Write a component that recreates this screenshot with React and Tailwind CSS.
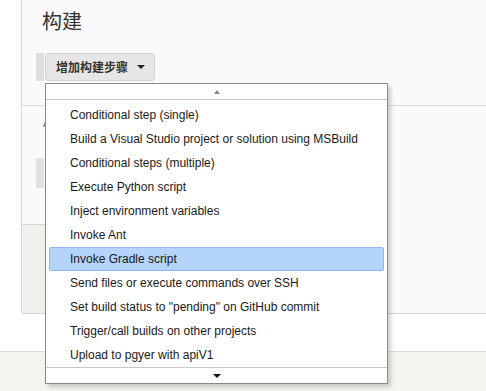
const items = [
  "Conditional step (single)",
  "Build a Visual Studio project or solution using MSBuild",
  "Conditional steps (multiple)",
  "Execute Python script",
  "Inject environment variables",
  "Invoke Ant",
  "Invoke Gradle script",
  "Send files or execute commands over SSH",
  'Set build status to "pending" on GitHub commit',
  "Trigger/call builds on other projects",
  "Upload to pgyer with apiV1",
];

const StepMenu = () => (
  <div className="absolute left-[45px] top-[83px] w-[343px] h-[301px] bg-white border border-[#8a8a8a] shadow-[3px_3px_4px_rgba(0,0,0,0.18)] flex flex-col">
    <div className="h-[16px] border-b border-[#c8c8c8] flex items-center justify-center">
      <span className="w-0 h-0 border-l-[3px] border-r-[3px] border-b-[4px] border-l-transparent border-r-transparent border-b-[#888]" />
    </div>
    <ul className="flex flex-col pt-[3px] px-[3px]">
      {items.map((label) => (
        <li
          key={label}
          className={
            label === "Invoke Gradle script"
              ? "h-[24px] flex items-center pl-[20px] text-[12px] text-[#1a1a1a] bg-[#b5d4fb] border border-[#8fb7ee] rounded-[2px]"
              : "h-[24px] flex items-center pl-[21px] text-[12px] text-[#1a1a1a]"
          }
        >
          {label}
        </li>
      ))}
    </ul>
    <div className="mt-auto h-[16px] border-t border-[#c8c8c8] flex items-center justify-center">
      <span className="w-0 h-0 border-l-[4px] border-r-[4px] border-t-[4px] border-l-transparent border-r-transparent border-t-[#111]" />
    </div>
  </div>
);

const App = () => {
  return (
    <div
      className="relative w-[486px] h-[391px] overflow-hidden bg-white"
      style={{fontFamily: '"Liberation Sans", Arial, "Noto Sans CJK SC", sans-serif'}}
    >
      <div className="flex h-[314px]">
        <div className="w-[21px] shrink-0 bg-white" />
        <div className="flex-1 flex flex-col bg-[#fafafa] border-l border-b border-[#d6d6d6] rounded-bl-[3px]">
          <section className="h-[106px] border-b border-[#dadada] flex flex-col">
            <h2
              className="pl-[20px] pt-[8px] text-[20px] leading-[26px] text-[#333] font-normal"
              style={{fontFamily: '"Noto Sans CJK SC", sans-serif'}}
            >
              构建
            </h2>
            <div className="mt-[19px] flex items-stretch h-[28px] pl-[14px] gap-[1px]">
              <span className="w-[8px] bg-[#dedede]" />
              <button className="h-[28px] pl-[10px] pr-[9px] flex items-center gap-[9px] bg-[#e6e6e6] border border-[#d3d3d3] rounded-[3px] text-[12px] font-bold text-[#333]">
                <span style={{fontFamily: '"Noto Sans CJK SC", sans-serif'}}>增加构建步骤</span>
                <span className="w-0 h-0 border-l-[4px] border-r-[4px] border-t-[4px] border-l-transparent border-r-transparent border-t-[#222]" />
              </button>
            </div>
          </section>
          <section className="h-[118px] flex flex-col pl-[14px] pt-[9px]">
            <span className="pl-[7px] text-[11px] text-[#666]">A</span>
            <span className="mt-[26px] w-[8px] h-[30px] bg-[#e2e2e2]" />
          </section>
          <section className="flex-1 w-[300px] bg-[#eff1ec] border-t border-[#d6d6d6]" />
        </div>
      </div>
      <div className="h-[38px] bg-white border-b border-[#dcdcdc]" />
      <div className="h-[39px] bg-[#f4f4ef]" />
      <StepMenu />
    </div>
  );
};

export default App;
